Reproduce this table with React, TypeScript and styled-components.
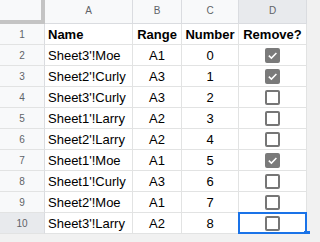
import React from 'react'
import styled, { createGlobalStyle, css } from 'styled-components'

const GlobalStyle = createGlobalStyle`
  html, body {
    margin: 0;
    padding: 0;
    background: #f1f1f1;
    font-family: Arial, "Liberation Sans", sans-serif;
  }
`

const Grid = styled.div`
  display: grid;
  grid-template-columns: 45px 88px 49px 57px 68px;
  grid-template-rows: 24px repeat(10, 21px);
  width: max-content;
  background: #fff;
`

const Corner = styled.div`
  background: #f8f9fa;
  border-right: 4px solid #c4c4c4;
  border-bottom: 4px solid #c4c4c4;
`

const ColHead = styled.div<{ $active?: boolean }>`
  display: flex;
  align-items: center;
  justify-content: center;
  background: ${(p) => (p.$active ? '#e8eaed' : '#f8f9fa')};
  border-right: 1px solid #dadce0;
  border-bottom: 1px solid #dadce0;
  color: #5f6368;
  font-size: 10px;
  padding-bottom: 2px;
`

const RowHead = styled.div<{ $active?: boolean }>`
  display: flex;
  align-items: center;
  justify-content: center;
  background: ${(p) => (p.$active ? '#e8eaed' : '#f8f9fa')};
  border-right: 1px solid #dadce0;
  border-bottom: 1px solid #e2e3e3;
  color: #5f6368;
  font-size: 10px;
`

const Cell = styled.div<{ $align?: 'left' | 'center'; $bold?: boolean; $selected?: boolean }>`
  position: relative;
  display: flex;
  align-items: center;
  justify-content: ${(p) => (p.$align === 'left' ? 'flex-start' : 'center')};
  padding: 0 3px;
  border-right: 1px solid #e2e3e3;
  border-bottom: 1px solid #e2e3e3;
  font-size: 13px;
  font-weight: ${(p) => (p.$bold ? 700 : 400)};
  color: #000;
  white-space: nowrap;
  ${(p) =>
    p.$selected &&
    css`
      &::after {
        content: '';
        position: absolute;
        left: -1px;
        top: -1px;
        right: -1px;
        bottom: -1px;
        border: 2px solid #1a73e8;
        pointer-events: none;
      }
      &::before {
        content: '';
        position: absolute;
        right: -4px;
        bottom: -4px;
        width: 6px;
        height: 6px;
        background: #1a73e8;
        z-index: 2;
      }
    `}
`

const Box = styled.span<{ $checked?: boolean }>`
  display: inline-flex;
  align-items: center;
  justify-content: center;
  box-sizing: border-box;
  width: 15px;
  height: 15px;
  border-radius: 2px;
  border: 2px solid ${(p) => (p.$checked ? '#7a7a7a' : '#767676')};
  background: ${(p) => (p.$checked ? '#7a7a7a' : '#fff')};
`

const Checkbox = ({ checked }: { checked: boolean }) => (
  <Box $checked={checked}>
    {checked && (
      <svg width="11" height="11" viewBox="0 0 11 11">
        <path d="M1.8 5.6 L4.4 8.1 L9.4 2.9" fill="none" stroke="#fff" strokeWidth="1.5" />
      </svg>
    )}
  </Box>
)

type TRow = {
  name: string
  range: string
  number: number
  remove: boolean
}

const rows: TRow[] = [
  { name: "Sheet3'!Moe", range: 'A1', number: 0, remove: true },
  { name: "Sheet2'!Curly", range: 'A3', number: 1, remove: true },
  { name: "Sheet3'!Curly", range: 'A3', number: 2, remove: false },
  { name: "Sheet1'!Larry", range: 'A2', number: 3, remove: false },
  { name: "Sheet2'!Larry", range: 'A2', number: 4, remove: false },
  { name: "Sheet1'!Moe", range: 'A1', number: 5, remove: true },
  { name: "Sheet1'!Curly", range: 'A3', number: 6, remove: false },
  { name: "Sheet2'!Moe", range: 'A1', number: 7, remove: false },
  { name: "Sheet3'!Larry", range: 'A2', number: 8, remove: false },
]

const App = () => {
  return (
    <>
      <GlobalStyle />
      <Grid>
        <Corner />
        <ColHead>A</ColHead>
        <ColHead>B</ColHead>
        <ColHead>C</ColHead>
        <ColHead $active>D</ColHead>

        <RowHead>1</RowHead>
        <Cell $align="left" $bold>
          Name
        </Cell>
        <Cell $bold>Range</Cell>
        <Cell $bold>Number</Cell>
        <Cell $bold>Remove?</Cell>

        {rows.map((row, i) => {
          const last = i === rows.length - 1
          return (
            <React.Fragment key={i}>
              <RowHead $active={last}>{i + 2}</RowHead>
              <Cell $align="left">{row.name}</Cell>
              <Cell>{row.range}</Cell>
              <Cell>{row.number}</Cell>
              <Cell $selected={last}>
                <Checkbox checked={row.remove} />
              </Cell>
            </React.Fragment>
          )
        })}
      </Grid>
    </>
  )
}

export default App
